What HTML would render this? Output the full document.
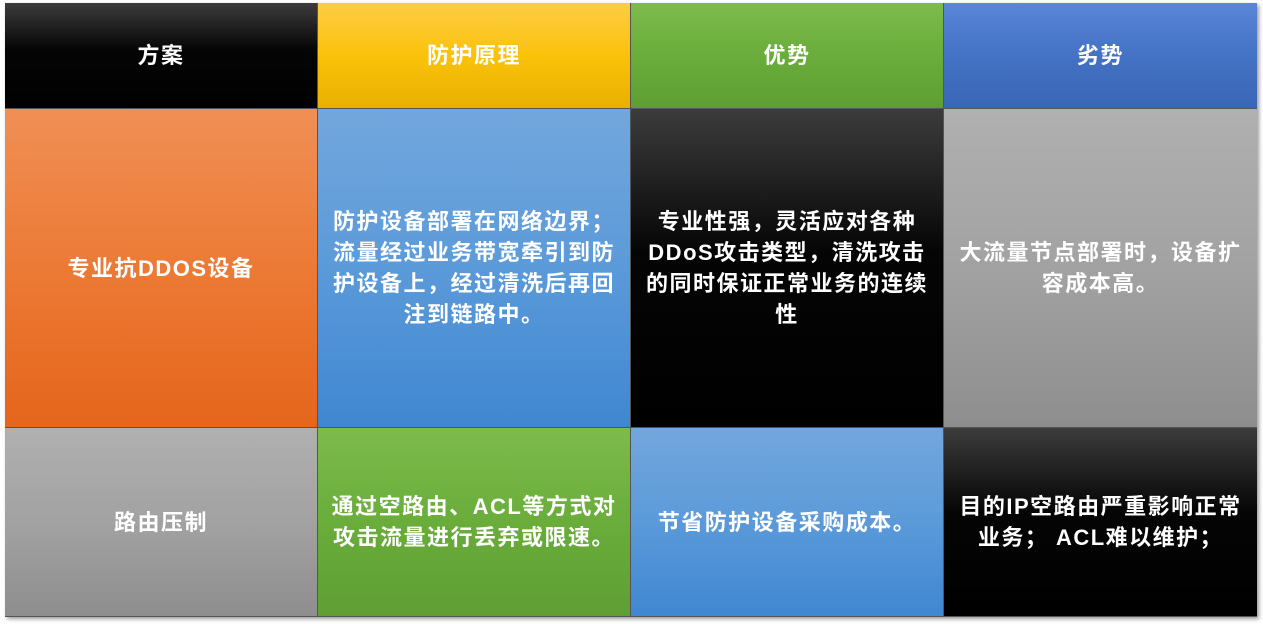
<!DOCTYPE html>
<html><head><meta charset="utf-8"><style>
html,body{margin:0;padding:0;width:1263px;height:624px;background:#fff;overflow:hidden}
.g{position:absolute;left:5px;top:3px;width:1252px;height:614px;display:grid;grid-template-columns:312px 312px 312px 313px;grid-template-rows:105px 318px 188px;gap:1px;background:#555;box-shadow:2px 2px 4px rgba(0,0,0,.4)}
.c{display:flex;align-items:center;justify-content:center;text-align:center;color:#fff;font:bold 22px/31px "Liberation Sans","Noto Sans CJK SC",sans-serif;letter-spacing:1.5px;white-space:nowrap;box-sizing:border-box}
.k{background:linear-gradient(#3c3c3c,#050505 45%,#000)}
.y{background:linear-gradient(#fccd45,#fbc20a 50%,#e8b000)}
.gr{background:linear-gradient(#7dbb4c,#6aad3b 50%,#5f9e34)}
.b{background:linear-gradient(#5a86d8,#4472c4 50%,#3a66b6)}
.o{background:linear-gradient(#f08f55,#ec7a35 50%,#e5651c)}
.lb{background:linear-gradient(#72a7dd,#5b9ad9 50%,#3f87d2)}
.gy{background:linear-gradient(#b0b0b0,#a2a2a2 50%,#8e8e8e)}
</style></head><body>
<div class="g">
<div class="c k">方案</div>
<div class="c y">防护原理</div>
<div class="c gr">优势</div>
<div class="c b">劣势</div>
<div class="c o">专业抗DDOS设备</div>
<div class="c lb">防护设备部署在网络边界；<br>流量经过业务带宽牵引到防<br>护设备上，经过清洗后再回<br>注到链路中。</div>
<div class="c k">专业性强，灵活应对各种<br>DDoS攻击类型，清洗攻击<br>的同时保证正常业务的连续<br>性</div>
<div class="c gy">大流量节点部署时，设备扩<br>容成本高。</div>
<div class="c gy">路由压制</div>
<div class="c gr">通过空路由、ACL等方式对<br>攻击流量进行丢弃或限速。</div>
<div class="c lb">节省防护设备采购成本。</div>
<div class="c k">目的IP空路由严重影响正常<br>业务； ACL难以维护；</div>
</div>
</body></html>
